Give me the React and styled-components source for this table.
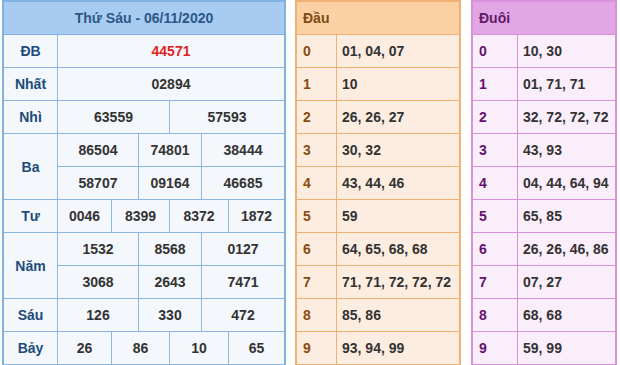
import React from "react";
import styled, { createGlobalStyle } from "styled-components";

const Global = createGlobalStyle`
  html, body { margin: 0; padding: 0; background: #ffffff; }
  * { box-sizing: border-box; }
  body { font-family: "Liberation Sans", Arial, sans-serif; font-size: 14px; font-weight: bold; }
`;

const Page = styled.div`
  display: flex;
  align-items: flex-start;
  padding-left: 2px;
  width: 620px;
  height: 365px;
  overflow: hidden;
`;

const ResultTable = styled.div`
  width: 284px;
  border: 2px solid #80b1e3;
  border-bottom: none;
  background: #f4f7fb;
  display: flex;
  flex-direction: column;
`;

const ResultHeader = styled.div`
  height: 33px;
  background: #a8cbf1;
  border-bottom: 1px solid #80b1e3;
  color: #2b5886;
  display: flex;
  align-items: center;
  justify-content: center;
`;

const Prize = styled.div`
  display: flex;
  border-bottom: 1px solid #8bb7e4;
`;

const Label = styled.div`
  width: 54px;
  flex: none;
  border-right: 1px solid #8bb7e4;
  color: #1d4c7c;
  display: flex;
  align-items: center;
  justify-content: center;
`;

const Values = styled.div`
  flex: 1;
  display: flex;
  flex-direction: column;
`;

const SubRow = styled.div`
  display: grid;
  grid-template-columns: ${(p) => p.$cols};
  height: ${(p) => (p.$last ? 32 : 33)}px;
  border-bottom: ${(p) => (p.$last ? "none" : "1px solid #8bb7e4")};
`;

const Num = styled.div`
  display: flex;
  align-items: center;
  justify-content: center;
  color: ${(p) => (p.$red ? "#e01f1f" : "#333333")};
  border-right: 1px solid #8bb7e4;
  &:last-child { border-right: none; }
`;

const LotoTable = styled.div`
  width: ${(p) => p.$w}px;
  margin-left: ${(p) => p.$ml}px;
  border: 2px solid ${(p) => p.$border};
  border-bottom: none;
  background: ${(p) => p.$bg};
  display: flex;
  flex-direction: column;
`;

const LotoHeader = styled.div`
  height: 33px;
  background: ${(p) => p.$bg};
  border-bottom: 1px solid ${(p) => p.$border};
  color: ${(p) => p.$color};
  display: flex;
  align-items: center;
  padding-left: 6px;
`;

const LotoRow = styled.div`
  display: grid;
  grid-template-columns: ${(p) => p.$key}px 1fr;
  height: 33px;
  border-bottom: 1px solid ${(p) => p.$border};
`;

const Key = styled.div`
  display: flex;
  align-items: center;
  padding-left: 6px;
  color: ${(p) => p.$color};
  border-right: 1px solid ${(p) => p.$border};
`;

const List = styled.div`
  display: flex;
  align-items: center;
  padding-left: 5px;
  color: #333333;
  white-space: nowrap;
`;

const prizes = [
  { label: "ĐB", rows: [["44571"]], cols: "1fr", red: true },
  { label: "Nhất", rows: [["02894"]], cols: "1fr" },
  { label: "Nhì", rows: [["63559", "57593"]], cols: "112px 1fr" },
  { label: "Ba", rows: [["86504", "74801", "38444"], ["58707", "09164", "46685"]], cols: "81px 63px 1fr" },
  { label: "Tư", rows: [["0046", "8399", "8372", "1872"]], cols: "54px 58px 59px 1fr" },
  { label: "Năm", rows: [["1532", "8568", "0127"], ["3068", "2643", "7471"]], cols: "81px 63px 1fr" },
  { label: "Sáu", rows: [["126", "330", "472"]], cols: "81px 63px 1fr" },
  { label: "Bảy", rows: [["26", "86", "10", "65"]], cols: "54px 58px 59px 1fr" },
];

const dau = [
  "01, 04, 07", "10", "26, 26, 27", "30, 32", "43, 44, 46",
  "59", "64, 65, 68, 68", "71, 71, 72, 72, 72", "85, 86", "93, 94, 99",
];
const duoi = [
  "10, 30", "01, 71, 71", "32, 72, 72, 72", "43, 93", "04, 44, 64, 94",
  "65, 85", "26, 26, 46, 86", "07, 27", "68, 68", "59, 99",
];

function Loto({ title, data, w, ml, keyW, border, headBg, bg, headColor, keyColor }) {
  return (
    <LotoTable $w={w} $ml={ml} $border={border} $bg={bg}>
      <LotoHeader $bg={headBg} $border={border} $color={headColor}>{title}</LotoHeader>
      {data.map((v, i) => (
        <LotoRow key={i} $key={keyW} $border={border}>
          <Key $color={keyColor} $border={border}>{i}</Key>
          <List>{v}</List>
        </LotoRow>
      ))}
    </LotoTable>
  );
}

export default function App() {
  return (
    <>
      <Global />
      <Page>
        <ResultTable>
          <ResultHeader>Thứ Sáu - 06/11/2020</ResultHeader>
          {prizes.map((p) => (
            <Prize key={p.label}>
              <Label>{p.label}</Label>
              <Values>
                {p.rows.map((r, ri) => (
                  <SubRow key={ri} $cols={p.cols} $last={ri === p.rows.length - 1}>
                    {r.map((n, ni) => (
                      <Num key={ni} $red={p.red}>{n}</Num>
                    ))}
                  </SubRow>
                ))}
              </Values>
            </Prize>
          ))}
        </ResultTable>
        <Loto
          title="Đầu"
          data={dau}
          w={166}
          ml={9}
          keyW={40}
          border="#efb274"
          headBg="#fbd1a4"
          bg="#fdede0"
          headColor="#7d4a12"
          keyColor="#8a4c0e"
        />
        <Loto
          title="Đuôi"
          data={duoi}
          w={146}
          ml={10}
          keyW={45}
          border="#d990dd"
          headBg="#e2a6e5"
          bg="#fbeefb"
          headColor="#5f1c68"
          keyColor="#671070"
        />
      </Page>
    </>
  );
}
